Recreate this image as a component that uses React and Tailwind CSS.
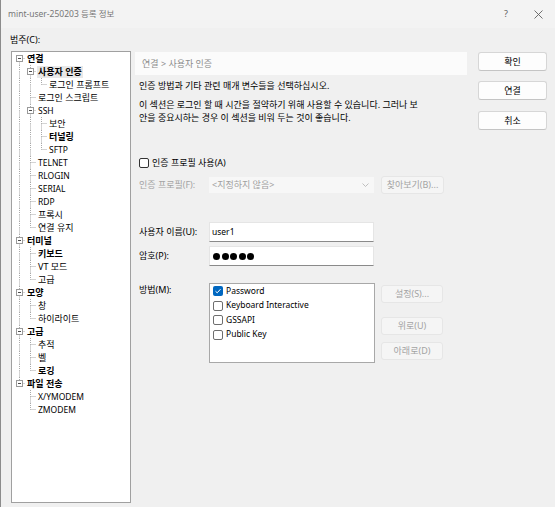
import React from 'react';

const tree = [
  { t: '연결', b: true, c: [
    { t: '사용자 인증', b: true, sel: true, c: [{ t: '로그인 프롬프트' }] },
    { t: '로그인 스크립트' },
    { t: 'SSH', c: [{ t: '보안' }, { t: '터널링', b: true }, { t: 'SFTP' }] },
    { t: 'TELNET' },
    { t: 'RLOGIN' },
    { t: 'SERIAL' },
    { t: 'RDP' },
    { t: '프록시' },
    { t: '연결 유지' },
  ] },
  { t: '터미널', b: true, c: [{ t: '키보드', b: true }, { t: 'VT 모드' }, { t: '고급' }] },
  { t: '모양', b: true, c: [{ t: '창' }, { t: '하이라이트' }] },
  { t: '고급', b: true, c: [{ t: '추적' }, { t: '벨' }, { t: '로깅', b: true }] },
  { t: '파일 전송', b: true, c: [{ t: 'X/YMODEM' }, { t: 'ZMODEM' }] },
];

const flatten = (nodes, level, guides, out) => {
  nodes.forEach((n, i) => {
    const last = i === nodes.length - 1;
    out.push({ ...n, level, last, guides, first: level === 0 && i === 0 });
    if (n.c) flatten(n.c, level + 1, [...guides, !last], out);
  });
  return out;
};

const rows = flatten(tree, 0, [], []);
const isLatin = (s) => /^[\x00-\x7f]+$/.test(s);

// tree connector drawing, one 11x13 cell per level
const Cell = ({ up, down, right, box }) => (
  <svg width="11" height="13" className="shrink-0">
    {up && <line x1="5.5" y1="0" x2="5.5" y2="6.5" stroke="#a8a8a8" strokeDasharray="1 1" />}
    {down && <line x1="5.5" y1="6.5" x2="5.5" y2="13" stroke="#a8a8a8" strokeDasharray="1 1" />}
    {right && <line x1="5.5" y1="6.5" x2="11" y2="6.5" stroke="#a8a8a8" strokeDasharray="1 1" />}
    {box && (
      <>
        <rect x="2.5" y="3.5" width="6" height="6" fill="white" stroke="#9a9a9a" />
        <line x1="4" y1="6.5" x2="7" y2="6.5" stroke="#4a4a4a" />
      </>
    )}
  </svg>
);

const CheckBox = ({ checked, dark }) => (
  checked ? (
    <div className="w-[10px] h-[10px] rounded-[2px] bg-[#0067c0] flex items-center justify-center shrink-0">
      <svg width="8" height="8" viewBox="0 0 8 8">
        <path d="M1.5 4.2 L3.2 5.8 L6.5 2.2" fill="none" stroke="white" strokeWidth="1" />
      </svg>
    </div>
  ) : (
    <div className={`w-[10px] h-[10px] rounded-[2px] border bg-white shrink-0 ${dark ? 'border-[#333333]' : 'border-[#6e6e6e]'}`} />
  )
);

const DisabledButton = ({ children, className = '' }) => (
  <div className={`w-[62px] h-[18px] rounded-[3px] bg-[#f5f5f5] border border-[#e6e6e6] flex items-center justify-center text-[#a3a3a3] ${className}`}>
    {children}
  </div>
);

const Button = ({ children, className = '' }) => (
  <div className={`w-[69px] h-[19px] rounded-[3px] bg-[#fdfdfd] border border-[#d6d6d6] border-b-[#c4c4c4] flex items-center justify-center text-black ${className}`}>
    {children}
  </div>
);

export default function App() {
  return (
    <div className="w-[555px] h-[507px] bg-[#f0f0f0] border-l border-[#8c8c8c] flex flex-col overflow-hidden font-['Noto_Sans','Noto_Sans_CJK_KR',sans-serif] text-[9px] text-black">
      {/* title bar */}
      <div className="h-[28px] shrink-0 flex items-center pl-[7px] pr-[12px] bg-[#f3f3f3]">
        <span className="text-[#767676] text-[8.5px]">mint-user-250203 등록 정보</span>
        <span className="ml-auto text-[#606060] text-[9px]">?</span>
        <svg width="9" height="9" className="ml-[26px]">
          <path d="M0.5 0.5 L8.5 8.5 M8.5 0.5 L0.5 8.5" stroke="#606060" strokeWidth="0.9" />
        </svg>
      </div>

      <div className="flex flex-1 pl-[10px]">
        {/* category tree */}
        <div className="w-[120px] flex flex-col">
          <div className="h-[23px] flex items-center -ml-px">범주(C):</div>
          <div className="h-[452px] border border-[#a0a0a0] bg-white pl-[2px]">
            {rows.map((r, i) => (
              <div key={i} className="flex h-[13px] items-center">
                {r.guides.map((g, d) => (
                  <Cell key={d} up={g} down={g} />
                ))}
                <Cell up={!r.first} down={!r.last} right box={!!r.c} />
                <span
                  className={`ml-px px-px leading-[12px] whitespace-nowrap ${isLatin(r.t) ? 'text-[8.5px]' : ''} ${r.b ? 'font-bold' : ''} ${r.sel ? 'bg-[#e8e8e8]' : ''}`}
                >
                  {r.t}
                </span>
              </div>
            ))}
          </div>
        </div>

        {/* settings panel */}
        <div className="w-[332px] ml-[4px] pt-[24px] flex flex-col">
          <div className="h-[23px] bg-[#fbfbfb] flex items-center pl-[7px] text-[#8c8c8c]">연결 &gt; 사용자 인증</div>
          <div className="mt-[4px] pl-[4px] leading-[13px]">인증 방법과 기타 관련 매개 변수들을 선택하십시오.</div>
          <div className="mt-[6px] pl-[4px] leading-[13px] whitespace-nowrap">
            이 섹션은 로그인 할 때 시간을 절약하기 위해 사용할 수 있습니다. 그러나 보<br />
            안을 중요시하는 경우 이 섹션을 비워 두는 것이 좋습니다.
          </div>

          <div className="mt-[32px] pl-[4px] h-[13px] flex items-center">
            <CheckBox dark />
            <span className="ml-[3px]">인증 프로필 사용(A)</span>
          </div>

          <div className="mt-[7px] pl-[4px] h-[18px] flex items-center">
            <span className="w-[70px] text-[#a3a3a3]">인증 프로필(F):</span>
            <div className="w-[165px] h-[16px] bg-[#f7f7f7] flex items-center pl-[3px] pr-[5px] text-[#a0a0a0]">
              &lt;지정하지 않음&gt;
              <svg width="7" height="4" className="ml-auto">
                <path d="M0.5 0.5 L3.5 3.5 L6.5 0.5" fill="none" stroke="#b0b0b0" strokeWidth="0.8" />
              </svg>
            </div>
            <DisabledButton className="ml-[7px] w-[63px]">찾아보기(B)...</DisabledButton>
          </div>

          <div className="mt-[28px] pl-[4px] h-[20px] flex items-center">
            <span className="w-[70px]">사용자 이름(U):</span>
            <div className="w-[165px] h-[20px] bg-white border border-[#e5e5e5] border-b-[#8a8a8a] flex items-center pl-[2px] text-[8.5px]">user1</div>
          </div>

          <div className="mt-[4px] pl-[4px] h-[20px] flex items-center">
            <span className="w-[70px]">암호(P):</span>
            <div className="w-[165px] h-[20px] bg-white border border-[#e5e5e5] border-b-[#8a8a8a] flex items-center pl-[3px] gap-[1.5px]">
              {[0, 1, 2, 3, 4].map((k) => (
                <div key={k} className="w-[7px] h-[7px] rounded-full bg-black" />
              ))}
            </div>
          </div>

          <div className="mt-[17px] pl-[4px] flex items-start">
            <span className="w-[70px] leading-[13px]">방법(M):</span>
            <div className="w-[166px] h-[80px] bg-white border border-[#a8a8a8] pl-[3px]">
              {[
                ['Password', true],
                ['Keyboard Interactive', false],
                ['GSSAPI', false],
                ['Public Key', false],
              ].map(([label, on]) => (
                <div key={label} className="h-[14.5px] flex items-center">
                  <CheckBox checked={on} />
                  <span className="ml-[3px] text-[8.5px]">{label}</span>
                </div>
              ))}
            </div>
            <div className="ml-[6px] flex flex-col">
              <DisabledButton className="mt-[2px]">설정(S)...</DisabledButton>
              <DisabledButton className="mt-[14px]">위로(U)</DisabledButton>
              <DisabledButton className="mt-[7px]">아래로(D)</DisabledButton>
            </div>
          </div>
        </div>

        {/* dialog buttons */}
        <div className="ml-[11px] pt-[24px] flex flex-col">
          <Button>확인</Button>
          <Button className="mt-[10px]">연결</Button>
          <Button className="mt-[11px]">취소</Button>
        </div>
      </div>
    </div>
  );
}
